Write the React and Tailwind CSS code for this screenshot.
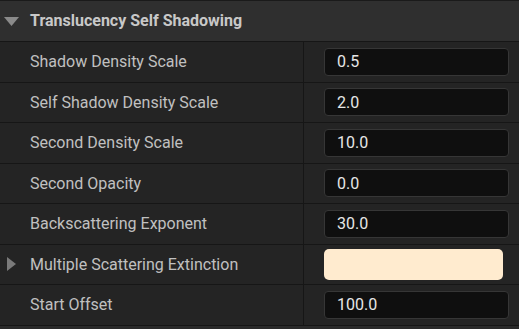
import React from 'react';

const rows = [
  { label: 'Shadow Density Scale', value: '0.5' },
  { label: 'Self Shadow Density Scale', value: '2.0' },
  { label: 'Second Density Scale', value: '10.0' },
  { label: 'Second Opacity', value: '0.0' },
  { label: 'Backscattering Exponent', value: '30.0' },
  { label: 'Multiple Scattering Extinction', color: true },
  { label: 'Start Offset', value: '100.0' },
];

const PropertyRow = ({ label, value, color }) => (
  <div className="flex h-[40.5px] border-b border-[#161616] bg-[#242424]">
    <div className="relative flex w-[303px] items-center pl-[30px] pt-px text-[16px] text-[#c0c0c0]">
      {color && (
        <svg className="absolute left-[7px] top-1/2 -translate-y-1/2" width="9" height="14" viewBox="0 0 9 14">
          <polygon points="0,0 9,7 0,14" fill="#7a7a7a" />
        </svg>
      )}
      {label}
    </div>
    <div className="w-px bg-[#161616]" />
    <div className="flex flex-1 items-center pl-[20px]">
      {color ? (
        <div className="h-[31px] w-[179px] rounded-[5px] bg-[#ffebcf]" />
      ) : (
        <div className="flex h-[28px] w-[185px] items-center rounded-[4px] border border-[#363636] bg-[#0f0f0f] pl-[12px] pt-px text-[16px] text-[#e6e6e6]">
          {value}
        </div>
      )}
    </div>
  </div>
);

export default function App() {
  return (
    <div className="h-[329px] w-[519px] overflow-hidden bg-[#2a2a2a]" style={{ fontFamily: 'Roboto, "Noto Sans", sans-serif' }}>
      <div className="h-px bg-[#1a1a1a]" />
      <div className="flex h-[41px] items-center border-b border-[#161616] bg-[#2f2f2f]">
        <svg className="ml-[4px] mr-[11px]" width="15" height="9" viewBox="0 0 15 9">
          <polygon points="0,0 15,0 7.5,9" fill="#8a8a8a" />
        </svg>
        <span className="text-[16px] font-bold text-[#c8c8c8]">Translucency Self Shadowing</span>
      </div>
      {rows.map((r) => (
        <PropertyRow key={r.label} {...r} />
      ))}
    </div>
  );
}
